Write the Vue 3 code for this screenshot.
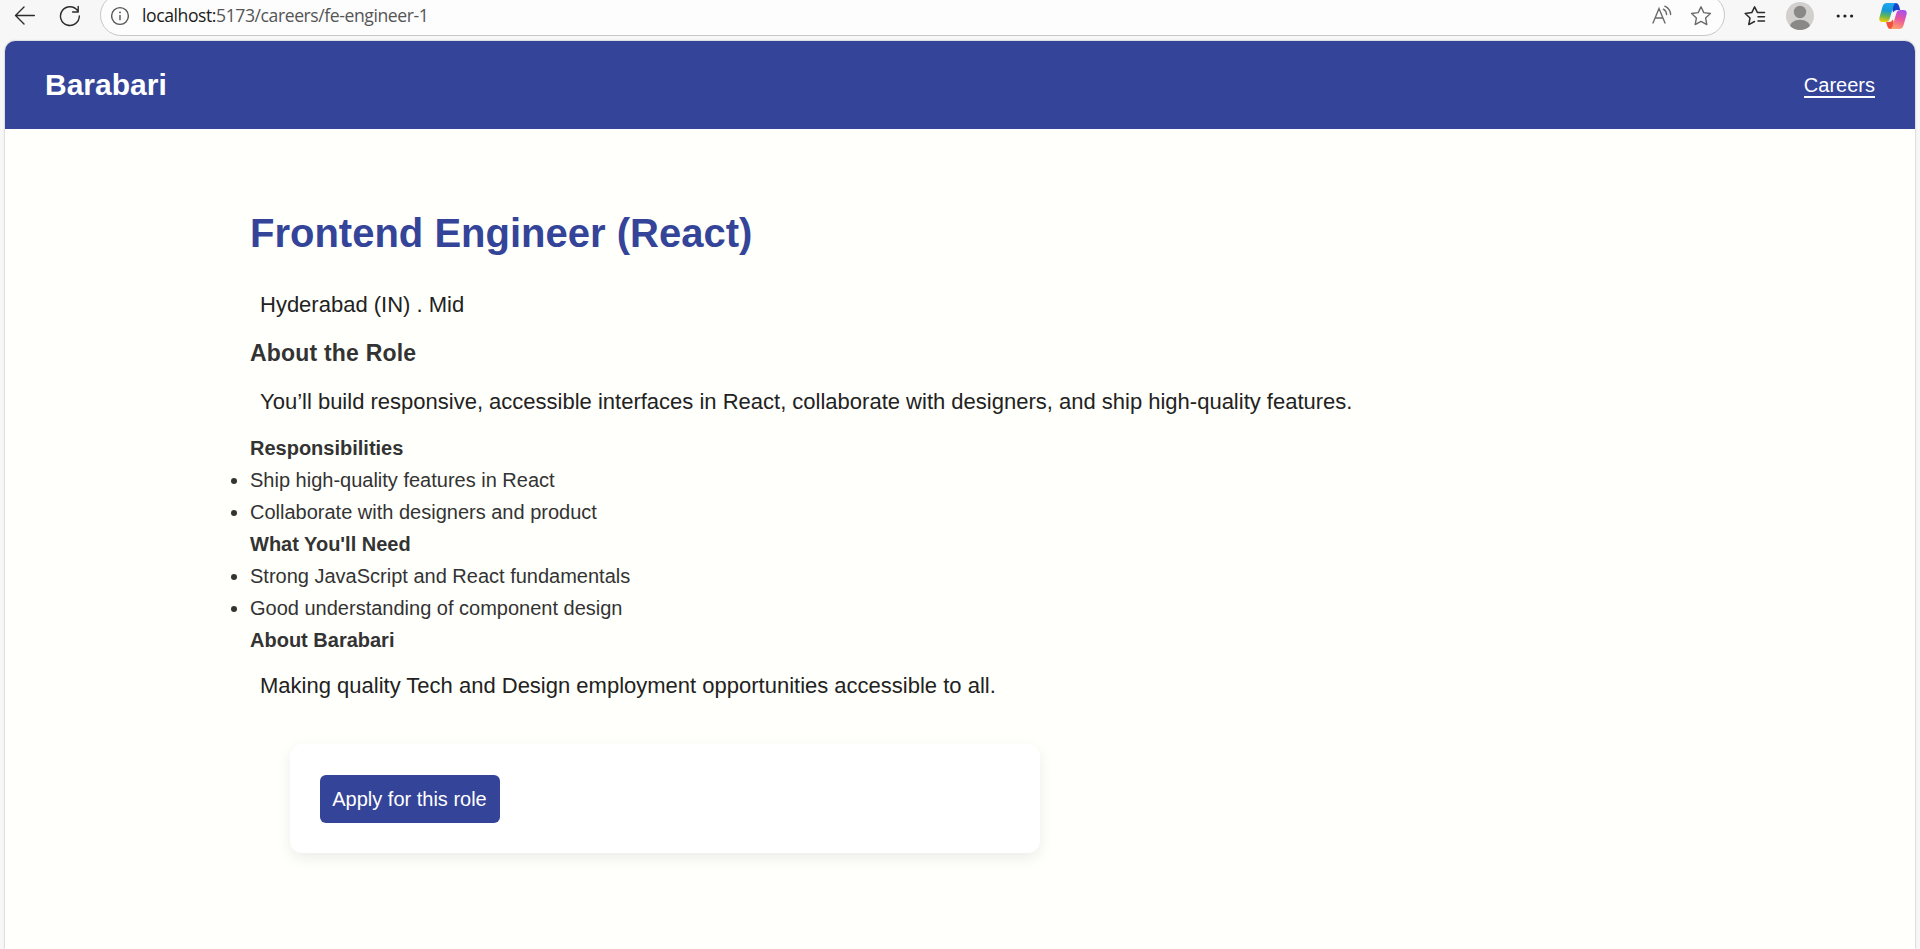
<script setup>
const responsibilities = ['Ship high-quality features in React', 'Collaborate with designers and product']
const needs = ['Strong JavaScript and React fundamentals', 'Good understanding of component design']
</script>

<template>
  <div class="browser">
    <div class="toolbar">
      <svg class="back" width="22" height="22" viewBox="0 0 22 22" fill="none" stroke="#2b2b2b" stroke-width="1.4" stroke-linecap="round" stroke-linejoin="round">
        <path d="M20.3 10.5H1.5M10 2L1.5 10.5L10 19" />
      </svg>
      <svg class="reload" width="22" height="22" viewBox="0 0 22 22" fill="none" stroke="#2b2b2b" stroke-width="1.4" stroke-linecap="round" stroke-linejoin="round">
        <path d="M20.3 11A9.4 9.4 0 1 1 18.6 5.7M19.2 1.4V7H13.6" />
      </svg>
      <div class="address">
        <svg class="info" width="20" height="20" viewBox="0 0 20 20" fill="none" stroke="#555" stroke-width="1.4">
          <circle cx="10" cy="10" r="8.4" />
          <path d="M10 9V14.2" />
          <circle cx="10" cy="6.4" r=".9" fill="#555" stroke="none" />
        </svg>
        <span class="url"><b>localhost:</b>5173/careers/fe-engineer-1</span>
        <svg class="read" width="20" height="20" viewBox="0 0 20 20" fill="none" stroke="#6b6b6b" stroke-width="1.4" stroke-linecap="round">
          <path d="M1 18L7 3.5L13 18M3.2 13H10.8M11.4 4.2Q14.4 6 14.6 9.6M12.8 1.2Q18.4 3.8 18.6 9.6" />
        </svg>
        <svg class="star" width="22" height="22" viewBox="0 0 22 22" fill="none" stroke="#6b6b6b" stroke-width="1.4" stroke-linejoin="round">
          <path d="M11 1.8L13.8 7.6L20.4 8.5L15.6 13L16.8 19.6L11 16.4L5.2 19.6L6.4 13L1.6 8.5L8.2 7.6Z" />
        </svg>
      </div>
      <svg class="favs" width="22" height="22" viewBox="0 0 22 22" fill="none" stroke="#2b2b2b" stroke-width="1.5" stroke-linecap="round" stroke-linejoin="round">
        <path d="M20.5 7.6H13.5L10.6 1.8L7.8 7.6L1.2 8.5L6 13L4.8 19.6L10.5 16.5M14 11.8H20.5M14 16H20.5" />
      </svg>
      <svg class="avatar" width="28" height="28" viewBox="0 0 28 28">
        <clipPath id="face"><circle cx="14" cy="14" r="14" /></clipPath>
        <g clip-path="url(#face)">
          <rect width="28" height="28" fill="#d2d0ce" />
          <circle cx="14" cy="10" r="6.2" fill="#8a8886" />
          <ellipse cx="14" cy="25.5" rx="10.5" ry="7.7" fill="#8a8886" />
        </g>
      </svg>
      <svg class="dots" width="18" height="4" viewBox="0 0 18 4" fill="#222">
        <circle cx="2.2" cy="2" r="1.6" /><circle cx="8.9" cy="2" r="1.6" /><circle cx="15.6" cy="2" r="1.6" />
      </svg>
      <svg class="copilot" width="28" height="28" viewBox="0 0 28 28">
        <defs>
          <linearGradient id="cool" x1=".5" y1="0" x2=".35" y2="1">
            <stop offset="0" stop-color="#20a7ee" /><stop offset=".4" stop-color="#1699d8" />
            <stop offset=".68" stop-color="#5db45c" /><stop offset="1" stop-color="#f5cb00" />
          </linearGradient>
          <linearGradient id="warm" x1=".7" y1="0" x2=".4" y2="1">
            <stop offset="0" stop-color="#a653ed" /><stop offset=".45" stop-color="#e8559f" /><stop offset="1" stop-color="#ffa06b" />
          </linearGradient>
        </defs>
        <path d="M12 1H17Q19.2 1 20 3.8L21.2 8H18Q15.5 8 14 10.5Z" fill="#1547c9" />
        <path d="M7 20H10Q12.5 20 14 17.5L16 27H11.5Q9.2 27 8.4 24.5Z" fill="#f2503c" />
        <path d="M8 1H17.5Q15.4 1 14.6 3.6L10.6 17Q9.7 20 6.9 20H3.5Q-.6 20 .5 15.2L3.6 4.3Q4.7 1 8 1Z" fill="url(#cool)" />
        <path d="M21.1 8H24.5Q28.6 8 27.5 12.8L24.4 23.7Q23.3 27 20 27H10.5Q12.6 27 13.4 24.4L17.4 11Q18.3 8 21.1 8Z" fill="url(#warm)" />
      </svg>
    </div>

    <div class="page">
      <header class="nav">
        <div class="brand">Barabari</div>
        <a class="link">Careers</a>
      </header>
      <main class="job">
        <h1>Frontend Engineer (React)</h1>
        <p class="meta">Hyderabad (IN) . Mid</p>
        <h2>About the Role</h2>
        <p class="about">You’ll build responsive, accessible interfaces in React, collaborate with designers, and ship high-quality features.</p>
        <h3>Responsibilities</h3>
        <ul><li v-for="item in responsibilities" :key="item">{{ item }}</li></ul>
        <h3>What You'll Need</h3>
        <ul><li v-for="item in needs" :key="item">{{ item }}</li></ul>
        <h3>About Barabari</h3>
        <p class="mission">Making quality Tech and Design employment opportunities accessible to all.</p>
        <section class="card"><button class="apply">Apply for this role</button></section>
      </main>
    </div>
  </div>
</template>

<style>
body { margin: 0; overflow: hidden; }
</style>

<style scoped>
.browser {
  box-sizing: border-box;
  height: 949px;
  padding: 0 5px;
  overflow: hidden;
  background: #f7f7f7;
  display: flex;
  flex-direction: column;
}
.toolbar {
  flex: none;
  height: 41px;
  display: flex;
  align-items: flex-start;
}
.toolbar svg { flex: none; display: block; }
.back { margin: 5px 0 0 9px; }
.reload { margin: 5px 0 0 23px; }
.address {
  box-sizing: border-box;
  width: 1625px;
  height: 42px;
  margin: -6px 0 0 19px;
  padding: 0 12px 0 9px;
  border: 1px solid #c8c8c8;
  border-radius: 21px;
  background: #fdfdfd;
  display: flex;
  align-items: center;
}
.info { margin-top: 2px; }
.url {
  margin: 0 auto 0 12px;
  font: 17.6px/24px "Open Sans", "Noto Sans", sans-serif;
  letter-spacing: -0.43px;
  color: #555;
}
.url b { font-weight: 400; color: #1b1b1b; }
.read { margin-right: 18px; }
.star { margin-top: 2px; }
.favs { margin: 5px 0 0 19px; }
.avatar { margin: 2px 0 0 20px; }
.dots { margin: 14px 0 0 22px; }
.copilot { margin: 2px 0 0 25px; }
.page {
  flex: 1;
  overflow: hidden;
  border-radius: 10px 10px 0 0;
  background: #fffffb;
  box-shadow: 0 0 2px rgba(0, 0, 0, 0.35);
  font-family: Arial, "Liberation Sans", sans-serif;
  font-size: 20px;
  line-height: 32px;
  color: #333;
}
.nav {
  box-sizing: border-box;
  height: 88px;
  padding: 0 40px;
  display: flex;
  justify-content: space-between;
  align-items: center;
  background: #344499;
  color: #fff;
}
.brand { font-size: 30px; font-weight: 700; }
.link { line-height: 22px; border-bottom: 2px solid #fff; margin-top: 2px; }
.job { padding: 72px 245px 0; }
h1, h2, h3, p, ul { margin: 0; padding: 0; }
h1 { font-size: 40px; line-height: 64px; color: #344499; }
p { padding: 0 10px; font-size: 22px; line-height: 36px; color: #222; }
.meta { margin-top: 22px; }
h2 { font-size: 23px; line-height: 36px; margin-top: 12px; letter-spacing: 0.2px; }
.about { margin: 13px 0 12px; }
h3 { font-size: 20px; line-height: 32px; }
.mission { margin-top: 12px; }
.card {
  box-sizing: border-box;
  width: 750px;
  height: 109px;
  margin: 40px 0 0 40px;
  padding: 31px 30px 30px;
  border-radius: 12px;
  background: #fff;
  box-shadow: 0 5px 15px rgba(0, 0, 0, 0.08);
}
.apply {
  display: block;
  width: 180px;
  height: 48px;
  padding: 0 1px 0 0;
  border: 0;
  border-radius: 6px;
  background: #344499;
  color: #fff;
  font: 20px Arial, "Liberation Sans", sans-serif;
}
</style>
